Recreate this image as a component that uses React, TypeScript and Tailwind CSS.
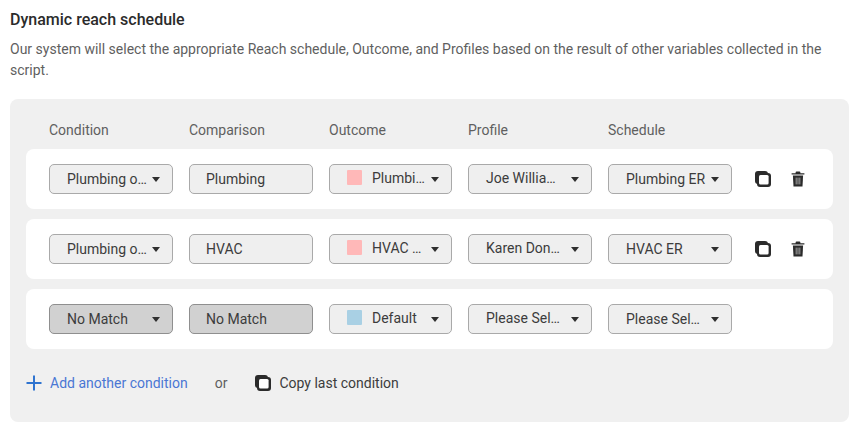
import React from "react";

type Cell = { text: string; swatch?: string; kind?: "select" | "input"; nudge?: boolean };

const CopyIcon = ({ className = "" }: { className?: string }) => (
  <svg width="16" height="16" viewBox="0 0 16 16" className={className}>
    <rect x="0" y="0" width="13" height="13" rx="3" fill="#2b2b2b" />
    <rect x="2" y="2" width="14" height="14" rx="3" fill="#2b2b2b" />
    <rect x="4" y="4" width="9.6" height="9.6" rx="1.5" fill="#fff" />
  </svg>
);

const TrashIcon = () => (
  <svg width="14" height="16" viewBox="0 0 14 16">
    <path d="M4.6 2.2V1.4C4.6 0.9 5 0.5 5.5 0.5H8.5C9 0.5 9.4 0.9 9.4 1.4V2.2H13.4V3.6H0.6V2.2Z" fill="#2b2b2b" />
    <path d="M1.9 4.6H12.1L11.5 15.6H2.5Z" fill="#2b2b2b" />
    <rect x="4.6" y="6.6" width="1.2" height="6.8" fill="#8f8f8f" />
    <rect x="6.4" y="6.6" width="1.2" height="6.8" fill="#8f8f8f" />
    <rect x="8.2" y="6.6" width="1.2" height="6.8" fill="#8f8f8f" />
  </svg>
);

const Caret = () => (
  <span className="h-0 w-0 border-x-[4.5px] border-t-[5px] border-x-transparent border-t-[#2f2f2f]" />
);

const Field = ({ cell, dark }: { cell: Cell; dark?: boolean }) => {
  const colors = dark
    ? "bg-[#d1d1d1] border-[#8f8f8f]"
    : "bg-[#efefef] border-[#a9a9a9]";

  if (cell.kind === "input") {
    return (
      <div className={`flex h-[30px] items-center rounded-[5px] border pl-4 text-sm text-[#3c3c3c] ${colors}`}>
        {cell.text}
      </div>
    );
  }

  return (
    <div className={`relative flex h-[30px] items-center rounded-[5px] border text-sm text-[#3c3c3c] ${colors}`}>
      {cell.swatch ? (
        <>
          <span className="mb-[3px] ml-[17px] h-[15px] w-[15px] rounded-[1px]" style={{ background: cell.swatch }} />
          <span className="ml-[10px] -translate-y-px">{cell.text}</span>
        </>
      ) : (
        <span className={cell.nudge ? "ml-[17px] -translate-y-px" : "ml-[17px]"}>{cell.text}</span>
      )}
      <span className="absolute right-[12px] top-[12px] flex">
        <Caret />
      </span>
    </div>
  );
};

const rows: { cells: Cell[]; actions: boolean; dark?: boolean }[] = [
  {
    actions: true,
    cells: [
      { text: "Plumbing o…" },
      { text: "Plumbing", kind: "input" },
      { text: "Plumbi…", swatch: "#ffb8b8" },
      { text: "Joe Willia…", nudge: true },
      { text: "Plumbing ER" },
    ],
  },
  {
    actions: true,
    cells: [
      { text: "Plumbing o…" },
      { text: "HVAC", kind: "input" },
      { text: "HVAC …", swatch: "#ffb8b8" },
      { text: "Karen Don…", nudge: true },
      { text: "HVAC ER" },
    ],
  },
  {
    actions: false,
    dark: true,
    cells: [
      { text: "No Match" },
      { text: "No Match", kind: "input" },
      { text: "Default", swatch: "#a9d0e4" },
      { text: "Please Sel…", nudge: true },
      { text: "Please Sel…" },
    ],
  },
];

const headers = ["Condition", "Comparison", "Outcome", "Profile", "Schedule"];

export default function App() {
  return (
    <div className="h-[432px] w-[864px] overflow-hidden bg-white pl-[10px] pr-[15px] pt-[9px] font-['Roboto',sans-serif]">
      <h2 className="text-base leading-[21px] font-medium text-[#2b2b2b]">Dynamic reach schedule</h2>
      <p className="mt-[9px] text-sm leading-[21px] text-[#5f5f5f]">
        Our system will select the appropriate Reach schedule, Outcome, and Profiles based on the result of other variables collected in the script.
      </p>

      <div className="mt-[18px] h-[323px] rounded-lg bg-[#f0f0f0] px-4 pt-[21px]">
        <div className="grid grid-cols-[124px_124px_123px_124px_124px] gap-x-4 pl-[23px] text-sm leading-5 text-[#5f5f5f]">
          {headers.map((h) => (
            <span key={h}>{h}</span>
          ))}
        </div>

        <div className="mt-[9px] flex flex-col gap-[10px]">
          {rows.map((row, i) => (
            <div key={i} className="flex h-[60px] items-center rounded-lg bg-white pl-[23px]">
              <div className="grid grid-cols-[124px_124px_123px_124px_124px] gap-x-4">
                {row.cells.map((cell, j) => (
                  <Field key={j} cell={cell} dark={row.dark && j < 2} />
                ))}
              </div>
              {row.actions && (
                <div className="ml-[23px] flex items-center gap-5">
                  <CopyIcon />
                  <TrashIcon />
                </div>
              )}
            </div>
          ))}
        </div>

        <div className="mt-6 flex h-5 items-center text-sm">
          <svg width="16" height="16" viewBox="0 0 16 16">
            <path d="M7 0.5H9V7H15.5V9H9V15.5H7V9H0.5V7H7Z" fill="#2f74d0" />
          </svg>
          <span className="ml-2 text-[#4a77d4]">Add another condition</span>
          <span className="ml-[27px] text-[#5f5f5f]">or</span>
          <CopyIcon className="ml-7" />
          <span className="ml-2 text-[#3c3c3c]">Copy last condition</span>
        </div>
      </div>
    </div>
  );
}
